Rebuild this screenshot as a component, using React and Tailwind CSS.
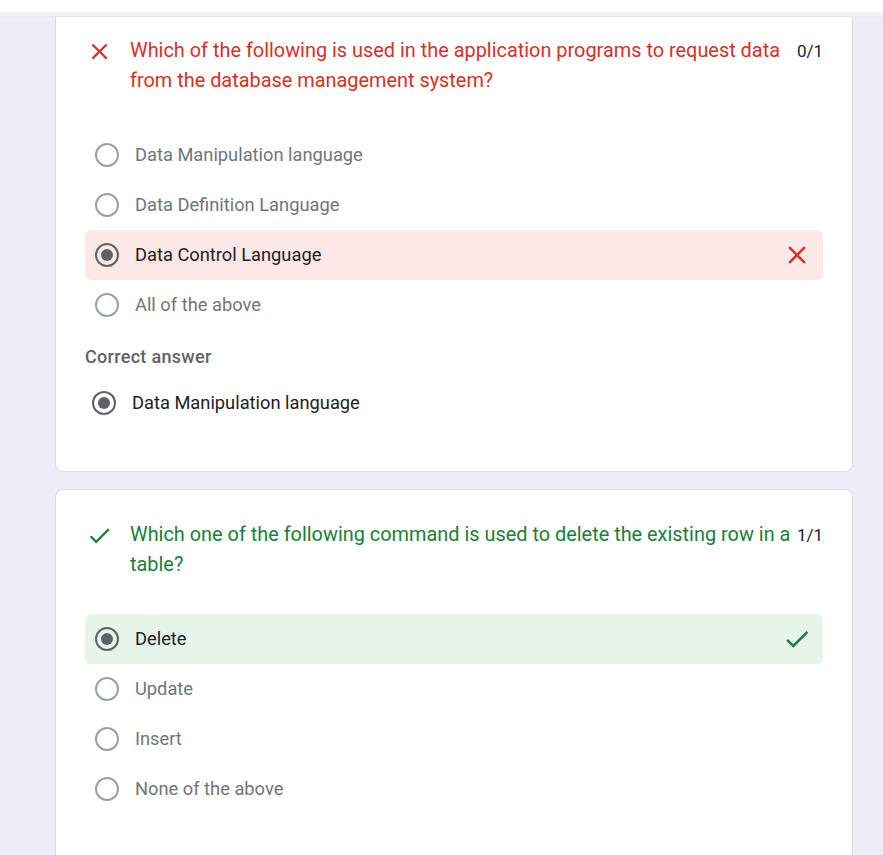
import React from "react";

const font = { fontFamily: "Roboto, 'Liberation Sans', sans-serif" };

const CloseIcon = ({ className }) => (
  <svg viewBox="0 0 24 24" className={className} fill="currentColor">
    <path d="M19 6.41L17.59 5 12 10.59 6.41 5 5 6.41 10.59 12 5 17.59 6.41 19 12 13.41 17.59 19 19 17.59 13.41 12z" />
  </svg>
);

const CheckIcon = ({ className }) => (
  <svg viewBox="0 0 24 24" className={className} fill="currentColor">
    <path d="M9 16.17L4.83 12l-1.42 1.41L9 19 21 7l-1.41-1.41z" />
  </svg>
);

const Radio = ({ checked }) =>
  checked ? (
    <div className="w-6 h-6 rounded-full border-2 border-[#5f6368] flex items-center justify-center shrink-0">
      <div className="w-3 h-3 rounded-full bg-[#5f6368]"></div>
    </div>
  ) : (
    <div className="w-6 h-6 rounded-full border-2 border-[#9aa0a6] shrink-0"></div>
  );

const Option = ({ label, checked, state }) => {
  let row = "";
  if (state === "wrong") row = "bg-[#fce8e6]";
  if (state === "right") row = "bg-[#e6f4ea]";
  return (
    <div className={`h-[50px] flex items-center pl-[10px] pr-[11px] rounded-md ${row}`}>
      <Radio checked={checked} />
      <span
        className={`ml-4 text-[18.3px] flex-1 ${
          checked ? "text-[#202124]" : "text-[#70757a]"
        }`}
      >
        {label}
      </span>
      {state === "wrong" && <CloseIcon className="w-[30px] h-[30px] text-[#d93025]" />}
      {state === "right" && <CheckIcon className="w-[30px] h-[30px] text-[#188038]" />}
    </div>
  );
};

const Question = ({ correct, text, points }) => (
  <div className="flex items-start pl-[1px]">
    <div className="h-[30px] flex items-center shrink-0">
      {correct ? (
        <CheckIcon className="w-[27px] h-[27px] text-[#188038]" />
      ) : (
        <CloseIcon className="w-[27px] h-[27px] text-[#d93025]" />
      )}
    </div>
    <div
      className={`ml-[17px] flex-1 text-[19.9px] leading-[30px] ${
        correct ? "text-[#188038]" : "text-[#d93025]"
      }`}
    >
      {text}
    </div>
    <div className="ml-[1px] text-[17px] leading-[30px] text-[#202124] shrink-0">{points}</div>
  </div>
);

export default function App() {
  return (
    <div className="min-h-screen bg-[#f0ebf8] overflow-hidden" style={font}>
      {/* top bar */}
      <div className="h-[12px] bg-white"></div>
      <div className="h-[5px] bg-[#f1f1f1] border-b border-[#e8e8e8]"></div>

      <div className="w-[798px] ml-[55px]">
        {/* card 1 */}
        <div className="bg-white border border-t-0 border-[#dadce0] rounded-b-lg px-[29px] pt-[19px] pb-[44px]">
          <Question
            correct={false}
            points="0/1"
            text="Which of the following is used in the application programs to request data from the database management system?"
          />
          <div className="mt-[34px]">
            <Option label="Data Manipulation language" />
            <Option label="Data Definition Language" />
            <Option label="Data Control Language" checked state="wrong" />
            <Option label="All of the above" />
          </div>
          <div className="mt-[15px] text-[18px] font-medium text-[#5f6368] leading-[24px] tracking-[0.3px]">
            Correct answer
          </div>
          <div className="mt-[10px] h-[48px] flex items-center pl-[7px]">
            <Radio checked />
            <span className="ml-4 text-[18.3px] text-[#202124]">Data Manipulation language</span>
          </div>
        </div>

        {/* card 2 */}
        <div className="mt-[17px] bg-white border border-[#dadce0] rounded-lg px-[29px] pt-[30px] pb-[60px]">
          <Question
            correct
            points="1/1"
            text="Which one of the following command is used to delete the existing row in a table?"
          />
          <div className="mt-[34px]">
            <Option label="Delete" checked state="right" />
            <Option label="Update" />
            <Option label="Insert" />
            <Option label="None of the above" />
          </div>
        </div>
      </div>
    </div>
  );
}
